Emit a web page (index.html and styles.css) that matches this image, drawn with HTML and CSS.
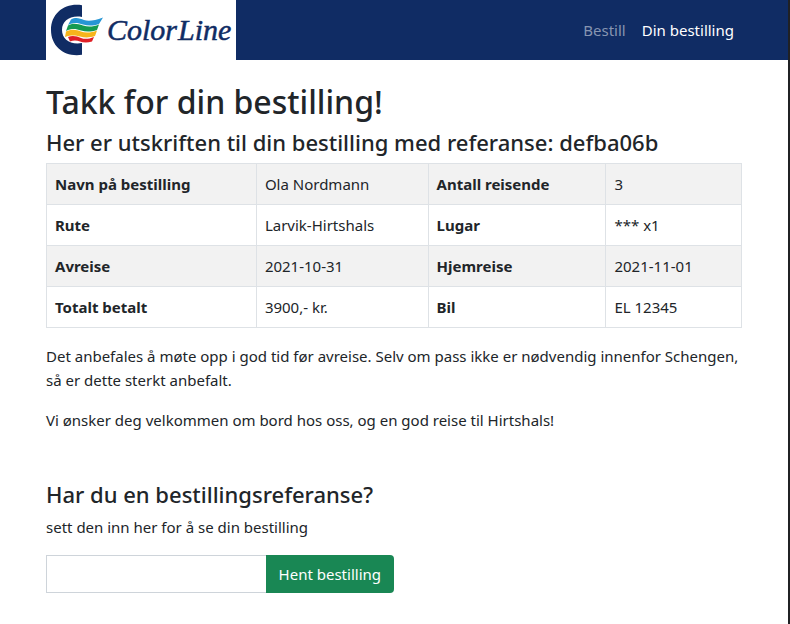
FILE: index.html
```html
<!DOCTYPE html>
<html lang="no">
<head>
  <meta charset="utf-8">
  <meta name="viewport" content="width=device-width, initial-scale=1">
  <title>Din bestilling</title>
  <link rel="stylesheet" href="styles.css">
</head>
<body>
  <header class="navbar">
    <a class="brand" href="#">
      <svg class="brand-logo" viewBox="0 0 190 60" role="img" aria-label="Color Line">
        <path fill="#102c64" d="M36 5.200C19 2.500 5 13 5 30s14 27.500 31 24.800V43C24 45 16 39 16 30s8-15 20-13z"/>
        <path fill="#2796d4" d="M25 19.500C30 16.500 34 18.500 38 20S48 21 57 17.500L53 24C47 26 42 26 37 24.500S28 22 22 25z"/>
        <path fill="#159a50" d="M22 25.500C27 22.500 32 24 37 25.500S47 27 53 24.500L51 30C45 32 40 32 35 30.500S26 28 20 31z"/>
        <path fill="#f7b51b" d="M20 31.500C26 28.500 31 30 35 31.500S45 33 51 30.500L49 36C43 38 38 37.500 34 36.500S26 34.500 19 37z"/>
        <path fill="#df1f26" d="M22 37C27 35 31 36.500 35 38S43 39 48 37L46 41.500C41 43 37 42.500 34 41.500S28 40 24 41.500z"/>
        <text class="brand-name" x="61" y="40">Color</text>
        <text class="brand-name" x="132" y="40">Line</text>
      </svg>
    </a>
    <nav class="nav">
      <a class="nav-link" href="#">Bestill</a>
      <a class="nav-link active" href="#">Din bestilling</a>
    </nav>
  </header>
  <main class="container">
    <h1>Takk for din bestilling!</h1>
    <h2>Her er utskriften til din bestilling med referanse: defba06b</h2>
    <table class="order">
      <colgroup><col class="c1"><col class="c2"><col class="c3"><col class="c4"></colgroup>
      <tbody>
        <tr><th scope="row">Navn på bestilling</th><td>Ola Nordmann</td><th scope="row">Antall reisende</th><td>3</td></tr>
        <tr><th scope="row">Rute</th><td>Larvik-Hirtshals</td><th scope="row">Lugar</th><td>*** x1</td></tr>
        <tr><th scope="row">Avreise</th><td>2021-10-31</td><th scope="row">Hjemreise</th><td>2021-11-01</td></tr>
        <tr><th scope="row">Totalt betalt</th><td>3900,- kr.</td><th scope="row">Bil</th><td>EL 12345</td></tr>
      </tbody>
    </table>
    <p>Det anbefales å møte opp i god tid før avreise. Selv om pass ikke er nødvendig innenfor Schengen, så er dette sterkt anbefalt.</p>
    <p>Vi ønsker deg velkommen om bord hos oss, og en god reise til Hirtshals!</p>
    <form class="lookup">
      <h2>Har du en bestillingsreferanse?</h2>
      <label for="ref">sett den inn her for å se din bestilling</label>
      <div class="input-group">
        <input id="ref" type="text">
        <button type="button">Hent bestilling</button>
      </div>
    </form>
  </main>
</body>
</html>
```
FILE: styles.css
```css
* {
  box-sizing: border-box;
}

body {
  margin: 0;
  min-height: 100vh;
  border-right: 2px solid #202124;
  background: #fff;
  color: #212529;
  font: 15px/24px "Segoe UI", "Noto Sans", sans-serif;
}

.navbar {
  display: flex;
  justify-content: space-between;
  align-items: center;
  height: 60px;
  padding: 0 46px;
  background: #102c64;
}

.brand {
  display: block;
  height: 60px;
  background: #fff;
}

.brand-logo {
  display: block;
  width: 190px;
  height: 60px;
}

.brand-name {
  fill: #102c64;
  stroke: #102c64;
  stroke-width: 0.5px;
  font: italic 30px "Liberation Serif", serif;
}

.nav {
  display: flex;
}

.nav-link {
  padding: 8px;
  color: #8795b1;
  text-decoration: none;
}

.nav-link.active {
  color: #fff;
}

.container {
  padding: 22px 46px;
}

h1,
h2 {
  margin: 0;
  font-weight: 500;
}

h1 {
  margin-bottom: 4px;
  font-size: 32px;
  line-height: 40px;
}

h2 {
  margin-bottom: 5px;
  font-size: 22px;
  line-height: 32px;
}

.order {
  width: 100%;
  margin-bottom: 16px;
  border-collapse: collapse;
  table-layout: fixed;
}

.c1 {
  width: 30.2%;
}

.c2 {
  width: 24.7%;
}

.c3 {
  width: 25.6%;
}

.order th,
.order td {
  padding: 8px;
  border: 1px solid #dee2e6;
  text-align: left;
}

.order tr:nth-child(odd) {
  background: #f2f2f2;
}

p {
  margin: 0 0 16px;
}

.lookup {
  padding-top: 30px;
}

.lookup label {
  display: block;
  margin-bottom: 16px;
}

.input-group {
  display: flex;
  width: 50%;
}

.input-group input {
  flex: 1;
  min-width: 0;
  height: 38px;
  padding: 6px 12px;
  border: 1px solid #ced4da;
  border-right: 0;
  font: inherit;
}

.input-group button {
  height: 38px;
  padding: 0 13px;
  border: 0;
  border-radius: 0 4px 4px 0;
  background: #198754;
  color: #fff;
  font: inherit;
}
```
